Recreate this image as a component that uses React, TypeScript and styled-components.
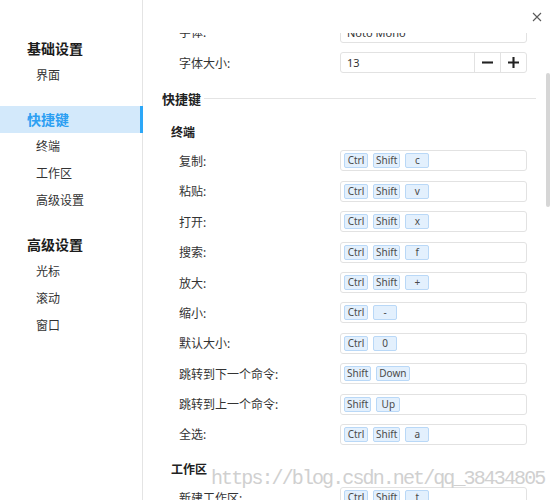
import styled, { createGlobalStyle } from 'styled-components';

const Global = createGlobalStyle`
  html, body {
    margin: 0;
    padding: 0;
    background: #ffffff;
  }
  body {
    font-family: "Noto Sans", "Noto Sans CJK SC", sans-serif;
    color: #333;
  }
`;

const Window = styled.div`
  position: relative;
  display: flex;
  width: 554px;
  height: 500px;
  overflow: hidden;
  background: #fff;
`;

const Sidebar = styled.nav`
  flex: 0 0 143px;
  padding-top: 34.5px;
  box-sizing: border-box;
  box-shadow: inset -1px 0 0 #e4e4e4;
`;

const NavGroup = styled.div`
  margin-bottom: 17px;
`;

const NavItem = styled.div<{ $head?: boolean; $active?: boolean }>`
  height: 27px;
  display: flex;
  align-items: center;
  padding-left: ${(p) => (p.$head ? 27 : 36)}px;
  font-size: ${(p) => (p.$head ? 14 : 12)}px;
  font-weight: ${(p) => (p.$head ? 700 : 400)};
  color: ${(p) => (p.$active ? '#2c9ff2' : p.$head ? '#1c1c1c' : '#333')};
  background: ${(p) => (p.$active ? '#d3e9fb' : 'transparent')};
  box-shadow: ${(p) => (p.$active ? 'inset -3px 0 0 #2ca7f8' : 'none')};
`;

const Main = styled.main`
  flex: 1;
  display: flex;
  flex-direction: column;
  min-width: 0;
`;

const TitleBar = styled.div`
  height: 33px;
  flex: 0 0 33px;
  display: flex;
  justify-content: flex-end;
  align-items: center;
  padding-right: 7px;
  padding-top: 1px;
  box-sizing: border-box;
`;

const CloseButton = styled.button`
  width: 20px;
  height: 20px;
  padding: 0;
  border: none;
  background: none;
  display: flex;
  align-items: center;
  justify-content: center;
`;

const Viewport = styled.div`
  position: relative;
  flex: 1;
  overflow: hidden;
`;

const Content = styled.div`
  margin-top: -16px;
  padding-right: 18px;
`;

const Row = styled.div`
  height: 30.4px;
  display: flex;
  align-items: center;
  padding-left: 36px;
`;

const Label = styled.div`
  width: 161px;
  font-size: 12px;
  color: #333;
  white-space: nowrap;
`;

const Field = styled.div`
  width: 187px;
  height: 21px;
  box-sizing: border-box;
  border: 1px solid #e2e2e2;
  border-radius: 3px;
  display: flex;
  align-items: center;
  background: #fff;
`;

const FieldText = styled.span`
  flex: 1;
  padding-left: 6px;
  font-size: 11px;
  color: #333;
`;

const StepButton = styled.div`
  width: 25px;
  height: 100%;
  border-left: 1px solid #e2e2e2;
  display: flex;
  align-items: center;
  justify-content: center;
`;

const Keys = styled(Field)`
  padding: 0 3px;
  gap: 5px;
`;

const Key = styled.span`
  height: 15px;
  min-width: 24px;
  box-sizing: border-box;
  padding: 0 2px;
  border: 1px solid #b9d8f7;
  border-radius: 2px;
  background: #e3f0fd;
  font-size: 10px;
  line-height: 13px;
  color: #4a4a4a;
  text-align: center;
`;

const Section = styled.div`
  height: 35px;
  display: flex;
  align-items: center;
  padding-left: 19px;
  font-size: 13px;
  font-weight: 700;
  color: #222;
  padding-top: 7px;
  box-sizing: border-box;
  &::after {
    content: '';
    flex: 1;
    height: 1px;
    margin-left: 3px;
    background: #e4e4e4;
  }
`;

const SubGroup = styled.div`
  margin-top: 7px;
  height: 26px;
  padding-bottom: 2px;
  box-sizing: border-box;
  display: flex;
  align-items: center;
  padding-left: 28px;
  font-size: 12px;
  font-weight: 700;
  color: #222;
`;

const ScrollThumb = styled.div`
  position: absolute;
  right: 4px;
  top: 40px;
  width: 4px;
  height: 134px;
  border-radius: 2px;
  background: #d6d6d6;
`;

const Watermark = styled.div`
  position: absolute;
  left: 211px;
  top: 467px;
  font-family: "Liberation Mono", monospace;
  font-size: 20px;
  letter-spacing: -1.9px;
  line-height: 24px;
  color: #d0d0d0;
  pointer-events: none;
  white-space: nowrap;
`;

const nav = [
  { head: '基础设置', items: ['界面'] },
  { head: '快捷键', items: ['终端', '工作区', '高级设置'], active: true },
  { head: '高级设置', items: ['光标', '滚动', '窗口'] },
];

const terminal: [string, string[]][] = [
  ['复制', ['Ctrl', 'Shift', 'c']],
  ['粘贴', ['Ctrl', 'Shift', 'v']],
  ['打开', ['Ctrl', 'Shift', 'x']],
  ['搜索', ['Ctrl', 'Shift', 'f']],
  ['放大', ['Ctrl', 'Shift', '+']],
  ['缩小', ['Ctrl', '-']],
  ['默认大小', ['Ctrl', '0']],
  ['跳转到下一个命令', ['Shift', 'Down']],
  ['跳转到上一个命令', ['Shift', 'Up']],
  ['全选', ['Ctrl', 'Shift', 'a']],
];

const workspace: [string, string[]][] = [['新建工作区', ['Ctrl', 'Shift', 't']]];

const ShortcutRow = ({ label, keys }: { label: string; keys: string[] }) => (
  <Row>
    <Label>{label}:</Label>
    <Keys>
      {keys.map((k) => (
        <Key key={k}>{k}</Key>
      ))}
    </Keys>
  </Row>
);

export default function App() {
  return (
    <Window>
      <Global />
      <Sidebar>
        {nav.map((g) => (
          <NavGroup key={g.head}>
            <NavItem $head $active={g.active}>
              {g.head}
            </NavItem>
            {g.items.map((i) => (
              <NavItem key={i}>{i}</NavItem>
            ))}
          </NavGroup>
        ))}
      </Sidebar>
      <Main>
        <TitleBar>
          <CloseButton aria-label="close">
            <svg width="10" height="10" viewBox="0 0 10 10">
              <path d="M1 1L9 9M9 1L1 9" stroke="#5a5a5a" strokeWidth="1.1" />
            </svg>
          </CloseButton>
        </TitleBar>
        <Viewport>
          <Content>
            <Row>
              <Label>字体:</Label>
              <Field>
                <FieldText>Noto Mono</FieldText>
              </Field>
            </Row>
            <Row>
              <Label>字体大小:</Label>
              <Field>
                <FieldText>13</FieldText>
                <StepButton>
                  <svg width="11" height="11" viewBox="0 0 10 10">
                    <path d="M0 5H10" stroke="#222" strokeWidth="1.9" />
                  </svg>
                </StepButton>
                <StepButton>
                  <svg width="11" height="11" viewBox="0 0 10 10">
                    <path d="M0 5H10M5 0V10" stroke="#222" strokeWidth="1.9" />
                  </svg>
                </StepButton>
              </Field>
            </Row>
            <Section>快捷键</Section>
            <SubGroup>终端</SubGroup>
            {terminal.map(([l, k]) => (
              <ShortcutRow key={l} label={l} keys={k} />
            ))}
            <SubGroup>工作区</SubGroup>
            {workspace.map(([l, k]) => (
              <ShortcutRow key={l} label={l} keys={k} />
            ))}
          </Content>
          <ScrollThumb />
        </Viewport>
      </Main>
      <Watermark>https://blog.csdn.net/qq_38434805</Watermark>
    </Window>
  );
}
